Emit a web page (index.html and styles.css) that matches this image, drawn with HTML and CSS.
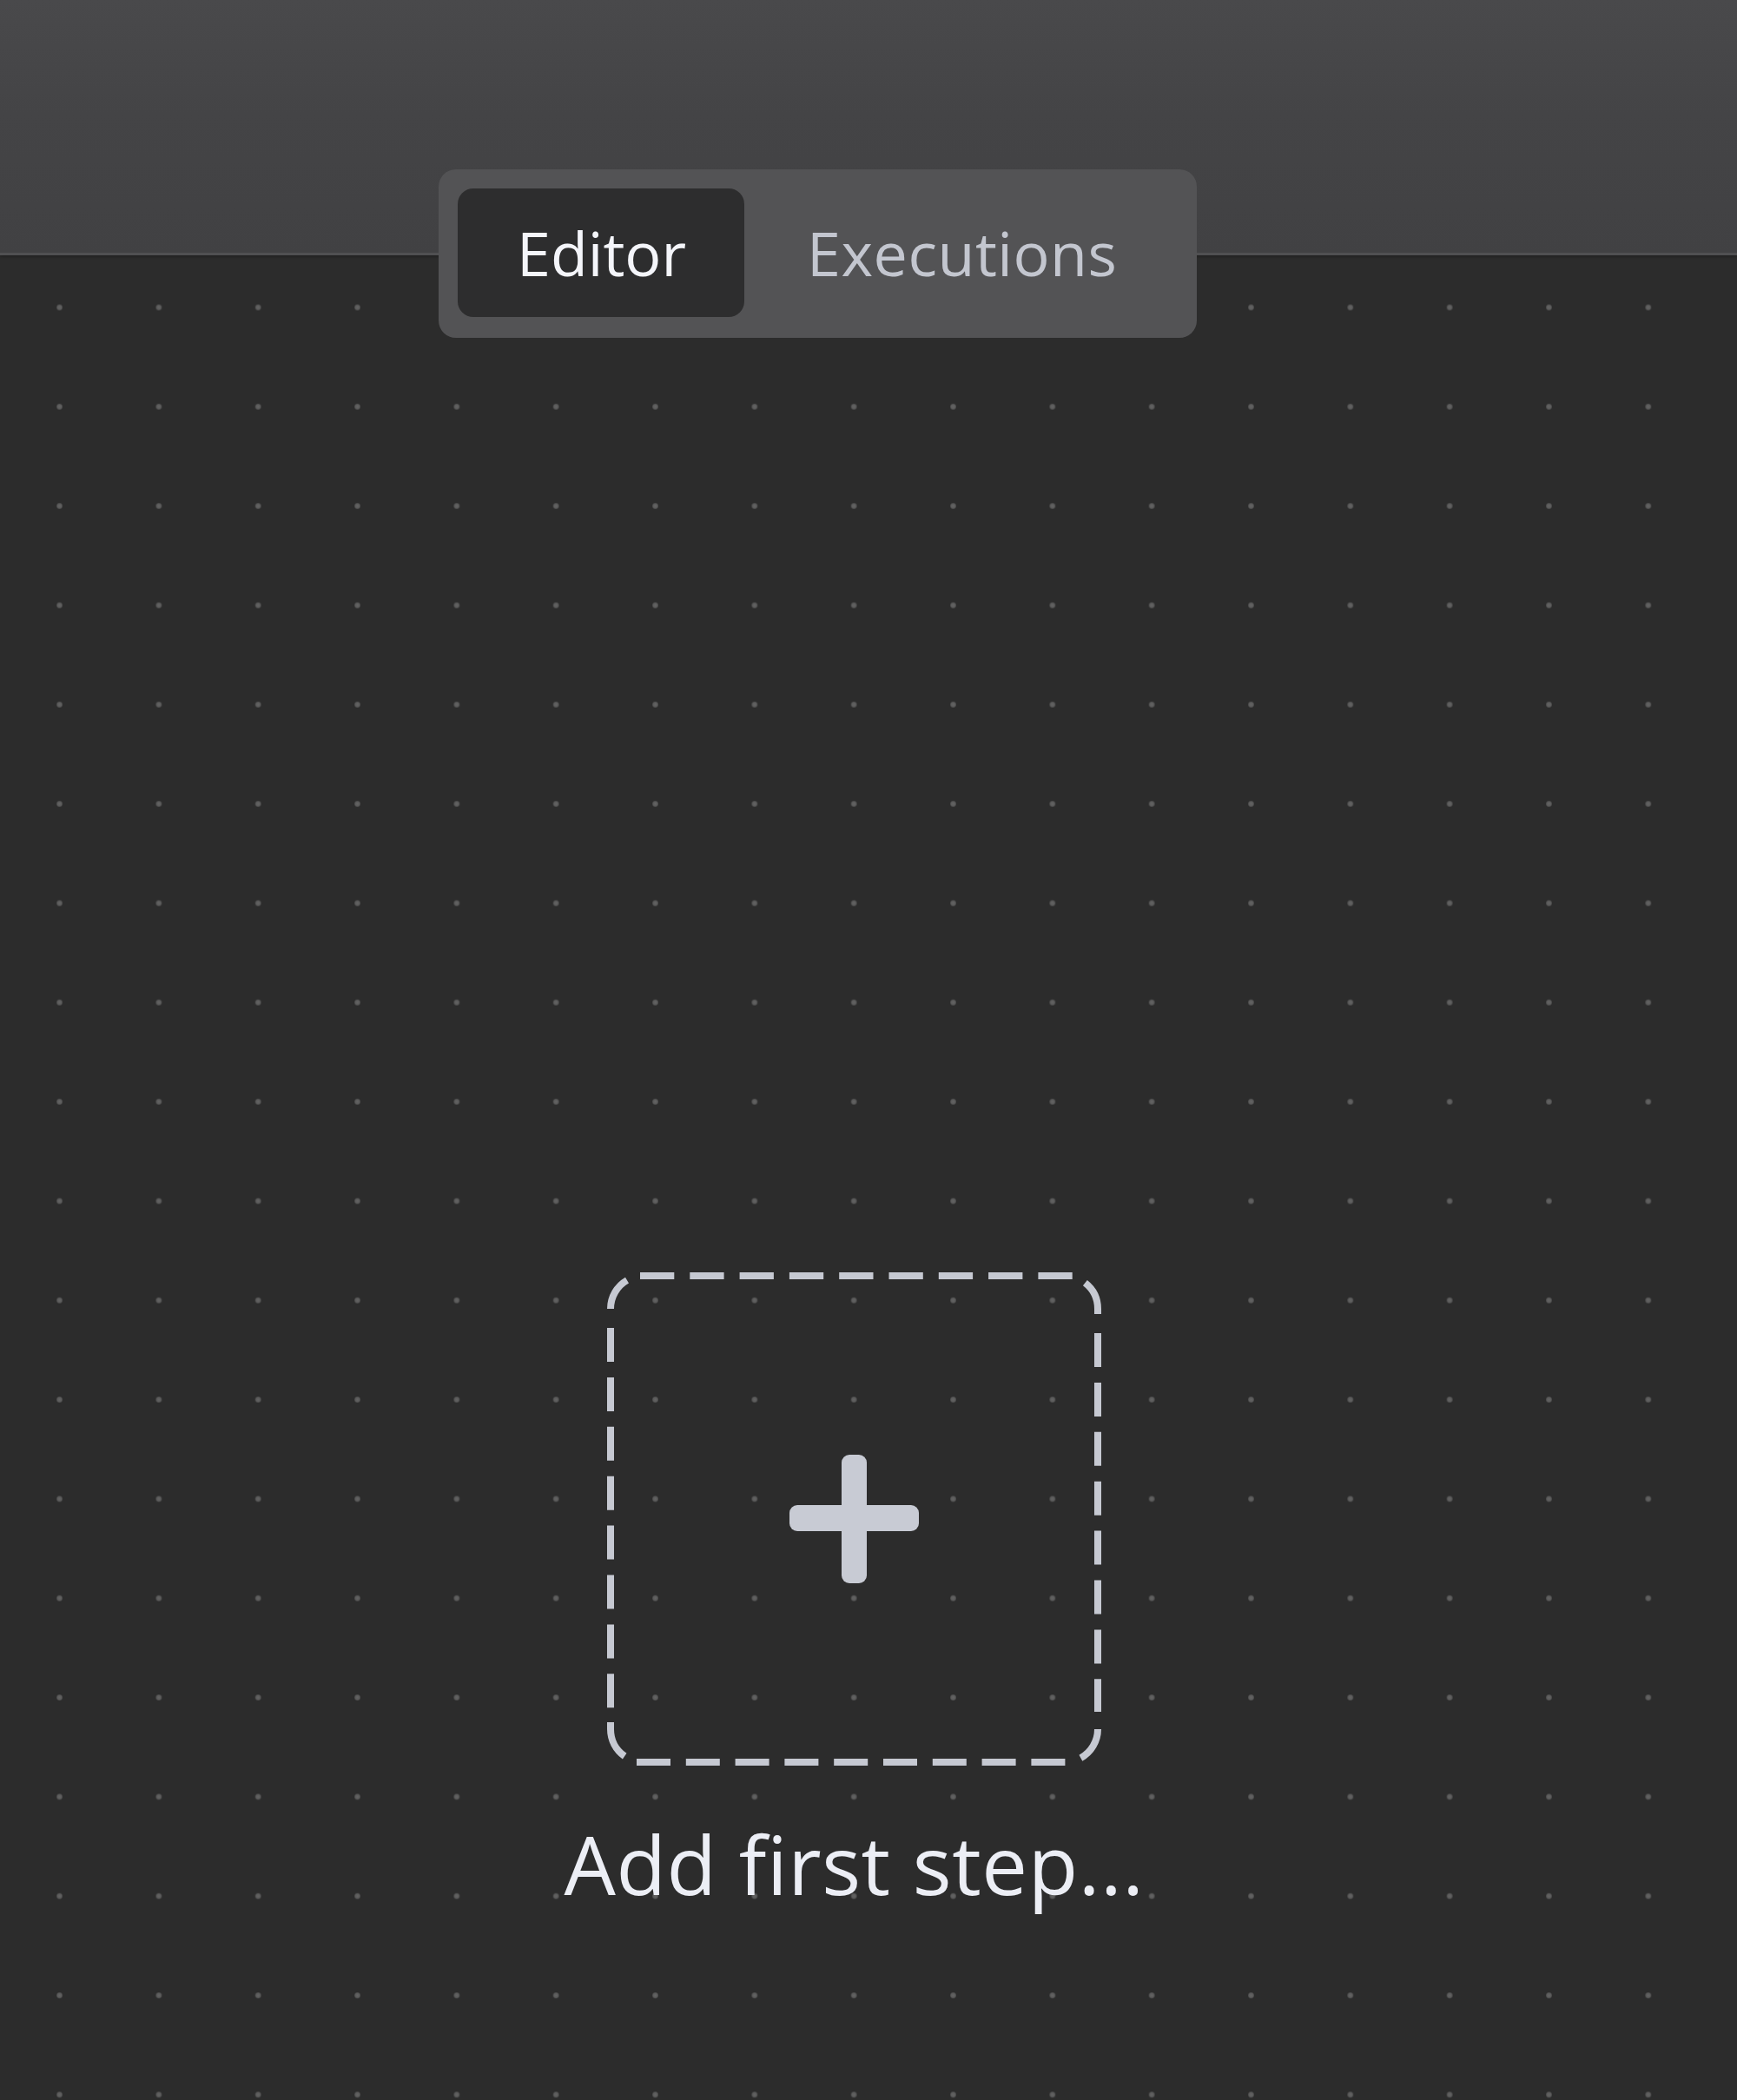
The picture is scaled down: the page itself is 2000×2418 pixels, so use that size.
FILE: index.html
```html
<!DOCTYPE html>
<html lang="en">
<head>
<meta charset="utf-8">
<title>Workflow editor</title>
<link rel="stylesheet" href="styles.css">
</head>
<body>
<div class="app">
  <header class="topbar"></header>
  <nav class="tabs">
    <div class="tab tab-active">Editor</div>
    <div class="tab">Executions</div>
  </nav>
  <main class="canvas">
    <div class="add-step">
      <div class="add-box">
        <svg class="add-box-svg" width="570" height="569" viewBox="0 0 570 569" aria-hidden="true">
          <g fill="none" stroke="#c6c9d2" stroke-width="8">
            <path d="M38 4 H536" stroke-dasharray="39.3 18"/>
            <path d="M34 564 H528" stroke-dasharray="39 17.8"/>
            <path d="M4 64 V502" stroke-dasharray="39 17.9"/>
            <path d="M565 70 V506" stroke-dasharray="39 17.9"/>
            <path d="M4 42 A38 38 0 0 1 23 9.1"/>
            <path d="M550.4 12.1 A38 38 0 0 1 565 42 V48"/>
            <path d="M4 518 V526 A38 38 0 0 0 20.2 557.1"/>
            <path d="M565 526 A38 38 0 0 1 545.4 559.2"/>
          </g>
          <g fill="#c8cbd4">
            <rect x="270" y="210" width="29" height="148" rx="9"/>
            <rect x="210" y="268" width="149" height="30" rx="9"/>
          </g>
        </svg>
      </div>
      <div class="add-label">Add first step...</div>
    </div>
  </main>
</div>
</body>
</html>
```
FILE: styles.css
```css
html, body {
  margin: 0;
  padding: 0;
  height: 100%;
}

body {
  font-family: "Open Sans", "Noto Sans", "Liberation Sans", sans-serif;
  background: #2c2c2c;
}

.app {
  position: relative;
  display: flex;
  flex-direction: column;
  width: 2000px;
  height: 2418px;
  overflow: hidden;
}

.topbar {
  flex: 0 0 auto;
  height: 291px;
  background: linear-gradient(180deg, #49494b 0%, #444446 45%, #414143 100%);
  border-bottom: 3px solid #505052;
  box-shadow: 0 2px 3px rgba(0, 0, 0, 0.25);
  position: relative;
  z-index: 1;
}

.tabs {
  position: absolute;
  left: 505px;
  top: 195px;
  z-index: 2;
  display: flex;
  padding: 22px 22px 24px 22px;
  background: #535355;
  border-radius: 20px;
}

.tab {
  height: 148px;
  display: flex;
  align-items: center;
  justify-content: center;
  padding: 0 70px 0 72px;
  font-size: 70px;
  font-weight: 500;
  letter-spacing: 0.5px;
  color: #c3c6cf;
  border-radius: 18px;
  white-space: nowrap;
}

.tab-active {
  padding: 0 67px 0 68px;
  letter-spacing: 0;
  background: #2d2d2e;
  color: #f4f5fa;
}

.canvas {
  flex: 1 1 auto;
  display: flex;
  flex-direction: column;
  align-items: center;
  padding: 1171px 33px 0 0;
  background-color: #2c2c2c;
  background-image: radial-gradient(circle, #636363 0, #5a5a5a 2.6px, rgba(44, 44, 44, 0) 4px);
  background-size: 114.33px 114.33px;
  background-position: 11.4px 2.8px;
}

.add-step {
  display: flex;
  flex-direction: column;
  align-items: center;
}

.add-box {
  width: 570px;
  height: 569px;
}

.add-box-svg {
  display: block;
}

.add-label {
  margin-top: 48px;
  font-size: 94px;
  font-weight: 500;
  letter-spacing: 0.6px;
  color: #eceef5;
  white-space: nowrap;
}
```
